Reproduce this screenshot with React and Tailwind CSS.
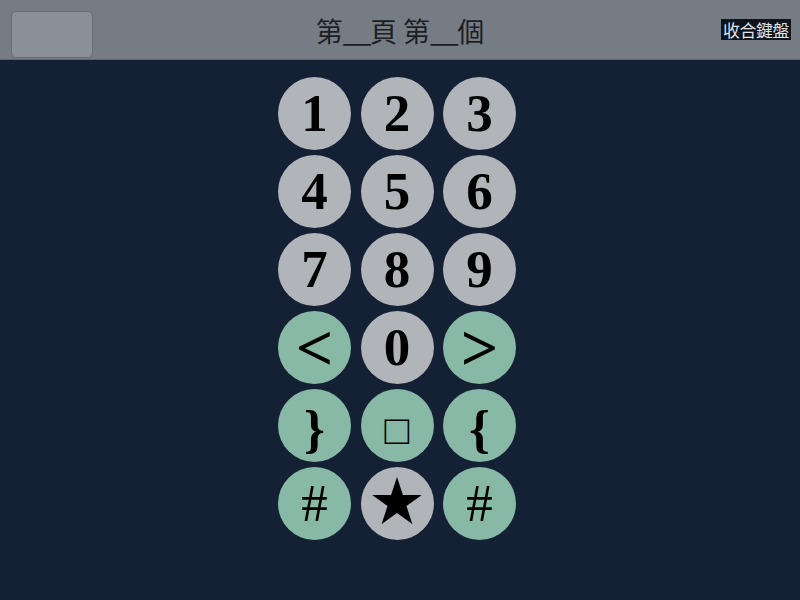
import React from 'react';

const keys = [
	{ label: '1', tone: 'gray', cls: 'font-bold text-[53px]' },
	{ label: '2', tone: 'gray', cls: 'font-bold text-[53px]' },
	{ label: '3', tone: 'gray', cls: 'font-bold text-[53px]' },
	{ label: '4', tone: 'gray', cls: 'font-bold text-[53px]' },
	{ label: '5', tone: 'gray', cls: 'font-bold text-[53px]' },
	{ label: '6', tone: 'gray', cls: 'font-bold text-[53px]' },
	{ label: '7', tone: 'gray', cls: 'font-bold text-[53px]' },
	{ label: '8', tone: 'gray', cls: 'font-bold text-[53px]' },
	{ label: '9', tone: 'gray', cls: 'font-bold text-[53px]' },
	{ label: '<', tone: 'green', cls: 'font-bold text-[66px]' },
	{ label: '0', tone: 'gray', cls: 'font-bold text-[53px]' },
	{ label: '>', tone: 'green', cls: 'font-bold text-[66px]' },
	{ label: '}', tone: 'green', cls: 'font-bold text-[53px] pt-[8px]' },
	{ label: '□', tone: 'green', cls: 'font-normal text-[41px] pt-[10px]' },
	{ label: '{', tone: 'green', cls: 'font-bold text-[53px] pt-[8px]' },
	{ label: '#', tone: 'green', cls: 'font-normal text-[53px]' },
	{ label: '★', tone: 'gray', cls: 'font-normal text-[53px]' },
	{ label: '#', tone: 'green', cls: 'font-normal text-[53px]' }
];

const Key = ({ label, tone, cls }) => {
	return (
		<button
			type="button"
			className={
				'w-[73px] h-[73px] rounded-full flex items-center justify-center text-black leading-none font-["Liberation_Serif","Noto_Sans_CJK_TC",serif] ' +
				(tone === 'green' ? 'bg-[#87b9a6] ' : 'bg-[#b1b4b9] ') +
				cls
			}
		>
			{label}
		</button>
	);
};

export default function App() {
	return (
		<div className="w-[800px] h-[600px] bg-[#142033] flex flex-col overflow-hidden">
			<div className="h-[60px] shrink-0 bg-[#767c84] border-b border-[#60666e] grid grid-cols-[1fr_auto_1fr] items-center px-[11px] font-['Noto_Sans_CJK_TC',sans-serif]">
				<div className="w-[82px] h-[47px] mt-[10px] rounded-[5px] bg-[#8a9098] border border-[#666c74]"></div>
				<div className="text-center text-[27px] leading-none text-[#1b1f25] mt-[1px]">
					第<span className="tracking-[-1.5px]">__</span>頁 第<span className="tracking-[-1.5px]">__</span>個
				</div>
				<div className="justify-self-end w-[70px] h-[21px] mr-[-2px] bg-[#0f141c] text-[#dfe2e6] text-[17px] leading-[21px] text-center tracking-[-0.5px]">
					收合鍵盤
				</div>
			</div>
			<div className="flex justify-center pt-[17px] pr-[6px]">
				<div className="grid grid-cols-[repeat(3,73px)] gap-x-[9.5px] gap-y-[5px]">
					{keys.map((k, i) => <Key key={i} {...k} />)}
				</div>
			</div>
		</div>
	);
}
